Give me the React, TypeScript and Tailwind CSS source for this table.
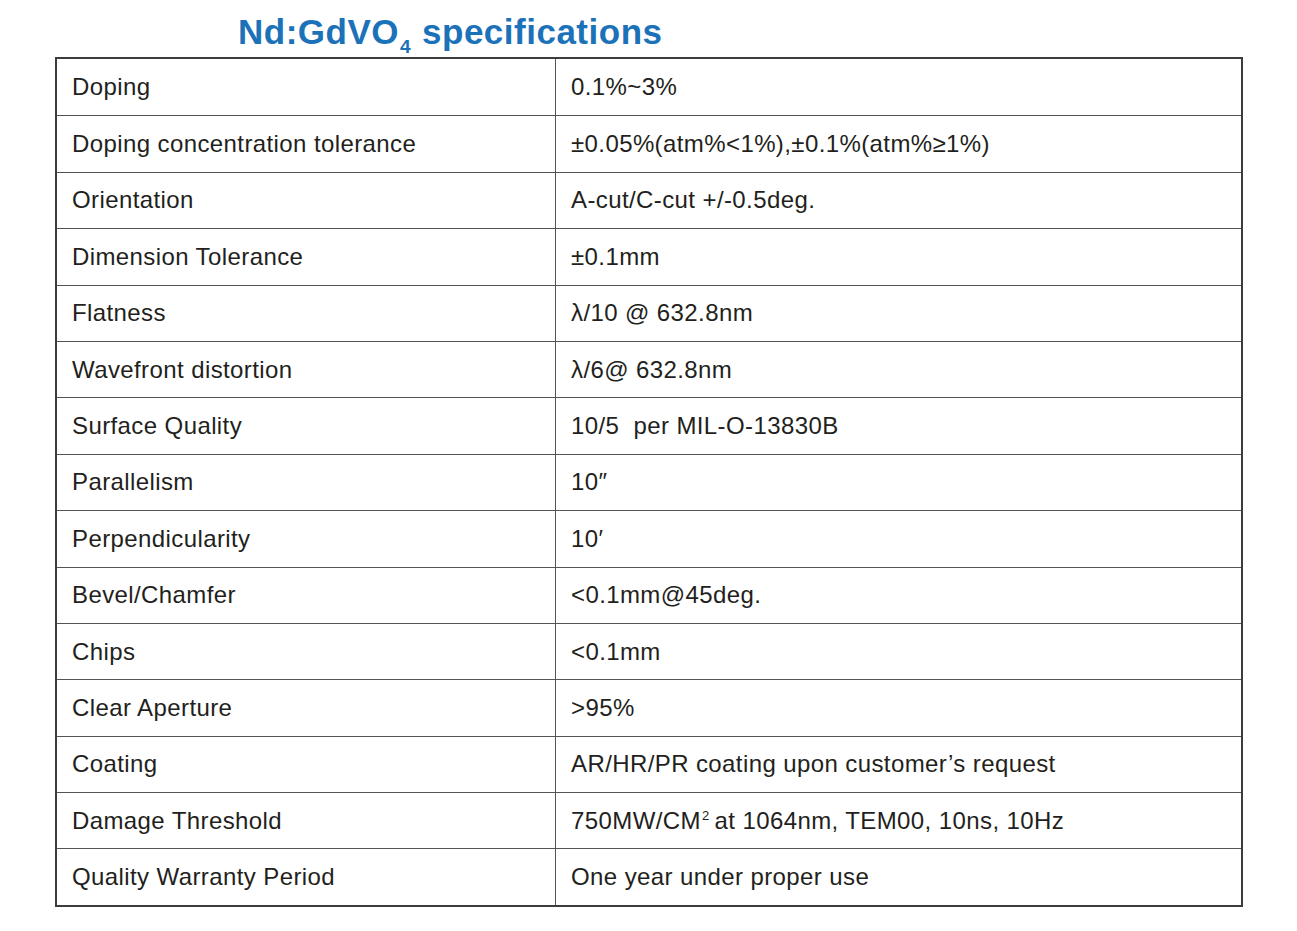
const rows: [string, React.ReactNode][] = [
  ["Doping", "0.1%~3%"],
  ["Doping concentration tolerance", "±0.05%(atm%<1%),±0.1%(atm%≥1%)"],
  ["Orientation", "A-cut/C-cut +/-0.5deg."],
  ["Dimension Tolerance", "±0.1mm"],
  ["Flatness", "λ/10 @ 632.8nm"],
  ["Wavefront distortion", "λ/6@ 632.8nm"],
  ["Surface Quality", "10/5\u00a0 per MIL-O-13830B"],
  ["Parallelism", "10″"],
  ["Perpendicularity", "10′"],
  ["Bevel/Chamfer", "<0.1mm@45deg."],
  ["Chips", "<0.1mm"],
  ["Clear Aperture", ">95%"],
  ["Coating", "AR/HR/PR coating upon customer’s request"],
  [
    "Damage Threshold",
    <>
      750MW/CM<sup className="text-[13px] relative -top-[5px] ml-[1px] mr-[5px]">2</sup>at 1064nm, TEM00, 10ns, 10Hz
    </>,
  ],
  ["Quality Warranty Period", "One year under proper use"],
];

export default function App() {
  return (
    <div className="w-[1297px] h-[931px] bg-white font-['Liberation_Sans',Arial,sans-serif] text-[#231f20]">
      <h1 className="pl-[238px] pt-[12px] h-[57px] text-[35px] leading-[40px] font-bold tracking-[0.5px] text-[#1c72b8] whitespace-nowrap">
        Nd:GdVO<sub className="text-[19px] relative top-[9px] ml-[1px] mr-[11px]">4</sub>specifications
      </h1>
      <div className="ml-[55px] w-[1188px] border-2 border-[#3c3c3c]">
        {rows.map(([k, v], i) => (
          <div
            key={i}
            className={`grid grid-cols-[499px_1fr] h-[56.4px] ${i > 0 ? "border-t-[1.5px] border-[#555]" : ""}`}
          >
            <div className="flex items-center pl-[15px] border-r-[1.5px] border-[#555] text-[24px] tracking-[0.4px]">
              {k}
            </div>
            <div className="flex items-center pl-[15px] text-[24px] tracking-[0.4px]">{v}</div>
          </div>
        ))}
      </div>
    </div>
  );
}
